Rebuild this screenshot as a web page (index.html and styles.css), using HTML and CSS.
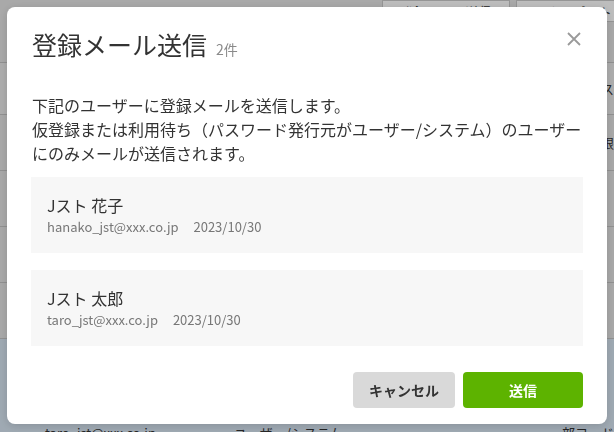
FILE: index.html
```html
<!DOCTYPE html>
<html lang="ja">
<head>
    <meta charset="UTF-8">
    <meta name="viewport" content="width=device-width, initial-scale=1.0">
    <title>登録メール送信</title>
    <link rel="stylesheet" href="styles.css">
</head>
<body>
    <!-- page behind the dialog -->
    <div class="page">
        <div class="toolbar">
            <span class="tb-btn tb-send">登録メール送信</span>
            <span class="tb-btn tb-export">エクスポート</span>
        </div>
        <div class="list">
            <div class="list-row row-head">
                <span class="col col-mail">メールアドレス</span>
                <span class="col col-kind">発行元</span>
                <span class="col col-dept">アクセス</span>
            </div>
            <div class="list-row">
                <span class="col col-mail">admin@xxx.co.jp</span>
                <span class="col col-kind">システム</span>
                <span class="col col-dept">管理権限</span>
            </div>
            <div class="list-row">
                <span class="col col-mail">suzuki_jst@xxx.co.jp</span>
                <span class="col col-kind">ユーザー</span>
                <span class="col col-dept">営業部</span>
            </div>
            <div class="list-row">
                <span class="col col-mail">hanako_jst@xxx.co.jp</span>
                <span class="col col-kind">ユーザー/システム</span>
                <span class="col col-dept">総務部</span>
            </div>
            <div class="list-row">
                <span class="col col-mail">sato_jst@xxx.co.jp</span>
                <span class="col col-kind">ユーザー</span>
                <span class="col col-dept">開発部</span>
            </div>
            <div class="list-row row-selected">
                <span class="col col-mail">taro_jst@xxx.co.jp</span>
                <span class="col col-kind">ユーザー/システム</span>
                <span class="col col-dept">部コード</span>
            </div>
        </div>
    </div>

    <div class="overlay">
        <div class="modal">
            <div class="modal-header">
                <h1 class="modal-title">登録メール送信<span class="count">2件</span></h1>
                <button class="close-btn" aria-label="閉じる">
                    <svg width="14" height="14" viewBox="0 0 14 14">
                        <path d="M1 1 L13 13 M13 1 L1 13" stroke="#9a9a9a" stroke-width="1.8" fill="none"/>
                    </svg>
                </button>
            </div>

            <p class="lead">
                下記のユーザーに登録メールを送信します。<br>
                仮登録または利用待ち（パスワード発行元がユーザー/システム）のユーザーにのみメールが送信されます。
            </p>

            <div class="user-list">
                <div class="user-card">
                    <div class="user-name">Jスト 花子</div>
                    <div class="user-meta">
                        <span>hanako_jst@xxx.co.jp</span>
                        <span class="user-date">2023/10/30</span>
                    </div>
                </div>
                <div class="user-card">
                    <div class="user-name">Jスト 太郎</div>
                    <div class="user-meta">
                        <span>taro_jst@xxx.co.jp</span>
                        <span class="user-date">2023/10/30</span>
                    </div>
                </div>
            </div>

            <div class="modal-footer">
                <button class="btn btn-cancel">キャンセル</button>
                <button class="btn btn-send">送信</button>
            </div>
        </div>
    </div>
</body>
</html>
```

FILE: styles.css
```css
html, body {
    margin: 0;
    height: 100%;
    overflow: hidden;
}

body {
    font-family: "Noto Sans CJK JP", "Noto Sans", sans-serif;
    background: #e4e4e4;
    color: #333;
}

/* page behind the dialog */
.page {
    height: 100%;
    overflow: hidden;
}

.toolbar {
    display: flex;
    gap: 6px;
    padding-left: 382px;
    height: 22px;
}

.tb-btn {
    flex: none;
    background: #fff;
    border: 1px solid #c9c9c9;
    font-size: 13px;
    line-height: 18px;
    padding: 2px 0 0;
    text-align: center;
}

.tb-send {
    width: 126px;
}

.tb-export {
    width: 112px;
}

.list {
    margin-top: 40px;
}

.list-row {
    display: flex;
    align-items: center;
    box-sizing: border-box;
    height: 56px;
    border-top: 1px solid #c4c4c4;
    font-size: 13px;
}

.row-head {
    height: 52px;
    background: #eaeaea;
}

.row-selected {
    background: #d7e5f2;
    align-items: flex-start;
    height: 120px;
    padding-top: 84px;
}

.col-mail {
    width: 190px;
    padding-left: 45px;
}

.col-kind {
    width: 330px;
}

.col-dept {
    white-space: nowrap;
}

/* dialog */
.overlay {
    position: fixed;
    inset: 0;
    background: rgba(0, 0, 0, 0.26);
    display: flex;
    align-items: flex-start;
    justify-content: center;
    padding-top: 7px;
}

.modal {
    width: 600px;
    box-sizing: border-box;
    background: #fff;
    border-radius: 8px;
    padding: 23px 24px 16px;
    box-shadow: 0 2px 10px rgba(0, 0, 0, 0.15);
}

.modal-header {
    display: flex;
    justify-content: space-between;
    align-items: flex-start;
}

.modal-title {
    margin: 0;
    font-size: 25px;
    line-height: 28px;
    font-weight: 400;
    color: #333;
    padding-left: 1px;
}

.count {
    font-size: 14px;
    color: #8a8a8a;
    margin-left: 9px;
}

.close-btn {
    border: 0;
    background: none;
    padding: 0;
    margin: 2px 2px 0 0;
    width: 14px;
    height: 14px;
    cursor: pointer;
}

.close-btn svg {
    display: block;
}

.lead {
    margin: 30px 0 0;
    font-size: 16px;
    line-height: 24px;
    color: #333;
    padding-left: 1px;
}

.user-list {
    margin-top: 12px;
    display: flex;
    flex-direction: column;
    gap: 17px;
}

.user-card {
    background: #f7f7f7;
    padding: 16px;
    height: 76px;
    box-sizing: border-box;
}

.user-name {
    font-size: 16px;
    line-height: 24px;
    color: #333;
}

.user-meta {
    font-size: 13px;
    line-height: 20px;
    color: #777;
}

.user-date {
    margin-left: 12px;
}

.modal-footer {
    margin-top: 26px;
    display: flex;
    justify-content: flex-end;
    gap: 8px;
}

.btn {
    border: 0;
    border-radius: 4px;
    height: 36px;
    font-family: inherit;
    font-size: 14px;
    font-weight: 700;
    cursor: pointer;
}

.btn-cancel {
    width: 102px;
    background: #d9d9d9;
    color: #333;
}

.btn-send {
    width: 120px;
    background: #5db300;
    color: #fff;
}
```
